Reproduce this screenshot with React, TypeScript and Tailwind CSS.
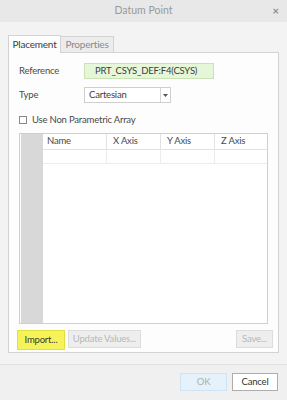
import React from "react";

export default function App() {
  const font = { fontFamily: 'Lato, "Noto Sans", sans-serif' };
  return (
    <div
      className="w-[287px] h-[400px] bg-[#f0f0f0] flex flex-col text-[9.5px] tracking-[-0.2px] text-[#4a4a4a] overflow-hidden whitespace-nowrap"
      style={font}
    >
      {/* title bar */}
      <div className="h-[22px] bg-[#e8e8e8] relative flex items-center justify-center shrink-0 tracking-normal">
        <span className="text-[#9a9a9a] text-[10.5px]">Datum Point</span>
        <span className="absolute right-[8px] top-[5px] text-[#8c8c8c] text-[11px] font-bold leading-none">×</span>
      </div>

      {/* body */}
      <div className="bg-[#f3f3f3] px-[8px] pt-[13px] shrink-0">
        {/* tabs */}
        <div className="flex h-[17px] items-end">
          <div className="h-[18px] w-[53px] bg-[#fdfdfd] border border-b-0 border-[#d3d3d3] flex items-center justify-center text-[#3c3c3c] text-[10px] relative z-10 -mb-px">
            Placement
          </div>
          <div className="h-[16px] w-[53px] bg-[#ececec] border border-b-0 border-l-0 border-[#d3d3d3] flex items-center justify-center text-[#8a8a8a] text-[10px]">
            Properties
          </div>
        </div>

        {/* panel */}
        <div className="h-[301px] w-[271px] bg-[#fdfdfd] border border-[#d3d3d3] pl-[10px] pr-[9px] pt-[10px] flex flex-col">
          <div className="flex items-center h-[16px]">
            <span className="w-[65px]">Reference</span>
            <div className="w-[130px] h-[16px] bg-[#e6f7d9] border border-[#c9e3b6] flex items-center pl-[10px] text-[#3c3c3c]">
              PRT_CSYS_DEF:F4(CSYS)
            </div>
          </div>
          <div className="flex items-center h-[16px] mt-[8px]">
            <span className="w-[65px]">Type</span>
            <div className="w-[87px] h-[16px] bg-white border border-[#cfcfcf] flex items-center">
              <span className="flex-1 pl-[4px] text-[#3c3c3c]">Cartesian</span>
              <div className="w-[10px] h-full border-l border-[#d6d6d6] flex items-center justify-center">
                <svg width="5" height="3" viewBox="0 0 5 3">
                  <path d="M0 0h5L2.5 3z" fill="#555" />
                </svg>
              </div>
            </div>
          </div>
          <div className="flex items-center h-[10px] mt-[12px]">
            <div className="w-[8px] h-[8px] border border-[#8a8a8a] bg-white" />
            <span className="ml-[5px]">Use Non Parametric Array</span>
          </div>

          {/* table */}
          <div className="mt-[8px] h-[191px] w-[249px] border border-[#cfcfcf] bg-white flex">
            <div className="w-[22px] ml-[1px] bg-[#d8d8d8]" />
            <div className="flex-1 flex flex-col">
              <div className="flex h-[16px] border-b border-[#e2e2e2]">
                <div className="w-[64px] pl-[4px] flex items-center border-r border-[#e2e2e2]">Name</div>
                <div className="w-[54px] pl-[6px] flex items-center border-r border-[#e2e2e2]">X Axis</div>
                <div className="w-[54px] pl-[6px] flex items-center border-r border-[#e2e2e2]">Y Axis</div>
                <div className="flex-1 pl-[6px] flex items-center">Z Axis</div>
              </div>
              <div className="flex h-[14px] border-b border-[#ececec]">
                <div className="w-[64px] border-r border-[#ececec]" />
                <div className="w-[54px] border-r border-[#ececec]" />
                <div className="w-[54px] border-r border-[#ececec]" />
                <div className="flex-1" />
              </div>
            </div>
          </div>

          {/* buttons */}
          <div className="flex items-start mt-[6px] h-[20px]">
            <div className="-ml-[2px] w-[48px] h-[20px] bg-[#f6f35a] border border-[#e3df3c] flex items-center justify-center text-[#3a3a2a]">
              Import...
            </div>
            <div className="ml-[3px] w-[73px] h-[18px] bg-[#eeeeee] border border-[#dcdcdc] flex items-center justify-center text-[#b8b8b8]">
              Update Values...
            </div>
            <div className="ml-auto mr-[-4px] w-[37px] h-[18px] bg-[#eeeeee] border border-[#dcdcdc] flex items-center justify-center text-[#b8b8b8]">
              Save...
            </div>
          </div>
        </div>
        <div className="h-[11px]" />
      </div>

      {/* footer */}
      <div className="flex-1 border-t border-[#e0e0e0] bg-[#f0f0f0] flex justify-end items-start pt-[8px] pr-[9px] gap-[5px]">
        <div className="w-[47px] h-[18px] bg-[#e5f1fb] border border-[#cfe3f2] flex items-center justify-center text-[#b0b0b0]">
          OK
        </div>
        <div className="w-[46px] h-[18px] bg-white border border-[#adadad] flex items-center justify-center text-[#333]">
          Cancel
        </div>
      </div>
    </div>
  );
}
